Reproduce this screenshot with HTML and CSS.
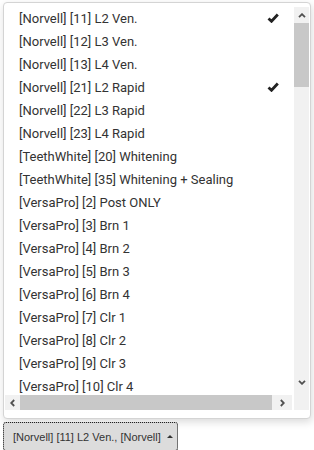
FILE: index.html
```html
<!DOCTYPE html>
<html lang="en">
<head>
    <meta charset="UTF-8">
    <title>Multiselect</title>
    <link rel="stylesheet" href="styles.css">
</head>
<body>
    <div class="menu">
        <div class="scroller">
            <ul class="options">
                <li class="opt selected"><span>[Norvell] [11] L2 Ven.</span><svg class="check" viewBox="0 0 12 10"><path d="M1.5 5.5 L4.5 8.3 L10.8 1.5"/></svg></li>
                <li class="opt"><span>[Norvell] [12] L3 Ven.</span></li>
                <li class="opt"><span>[Norvell] [13] L4 Ven.</span></li>
                <li class="opt selected"><span>[Norvell] [21] L2 Rapid</span><svg class="check" viewBox="0 0 12 10"><path d="M1.5 5.5 L4.5 8.3 L10.8 1.5"/></svg></li>
                <li class="opt"><span>[Norvell] [22] L3 Rapid</span></li>
                <li class="opt"><span>[Norvell] [23] L4 Rapid</span></li>
                <li class="opt"><span>[TeethWhite] [20] Whitening</span></li>
                <li class="opt"><span>[TeethWhite] [35] Whitening + Sealing</span></li>
                <li class="opt"><span>[VersaPro] [2] Post ONLY</span></li>
                <li class="opt"><span>[VersaPro] [3] Brn 1</span></li>
                <li class="opt"><span>[VersaPro] [4] Brn 2</span></li>
                <li class="opt"><span>[VersaPro] [5] Brn 3</span></li>
                <li class="opt"><span>[VersaPro] [6] Brn 4</span></li>
                <li class="opt"><span>[VersaPro] [7] Clr 1</span></li>
                <li class="opt"><span>[VersaPro] [8] Clr 2</span></li>
                <li class="opt"><span>[VersaPro] [9] Clr 3</span></li>
                <li class="opt"><span>[VersaPro] [10] Clr 4</span></li>
            </ul>
            <div class="vbar">
                <div class="arrow"><svg viewBox="0 0 8 5"><path d="M1 4.2 L4 1.2 L7 4.2"/></svg></div>
                <div class="vthumb"></div>
                <div class="vtrack"></div>
                <div class="arrow down"><svg viewBox="0 0 8 5"><path d="M1 0.8 L4 3.8 L7 0.8"/></svg></div>
            </div>
            <div class="hbar">
                <div class="arrow"><svg viewBox="0 0 5 8"><path d="M4.2 1 L1.2 4 L4.2 7"/></svg></div>
                <div class="hthumb"></div>
                <div class="arrow wide"><svg viewBox="0 0 5 8"><path d="M0.8 1 L3.8 4 L0.8 7"/></svg></div>
            </div>
        </div>
    </div>
    <button class="toggle">[Norvell] [11] L2 Ven., [Norvell] <span class="caret"></span></button>
</body>
</html>
```

FILE: styles.css
```css
body {
    margin: 0;
    background: #fff;
    font-family: Roboto, "Liberation Sans", sans-serif;
}
.menu {
    margin: 2px 0 0 3px;
    width: 304px;
    height: 409px;
    padding: 4px 1px 2px 1px;
    border: 1px solid #d4d4d4;
    border-radius: 4px;
    background: #fff;
    box-shadow: 1px 3px 8px rgba(0,0,0,0.15);
}
.scroller {
    display: grid;
    grid-template-columns: 287px 15px;
    grid-template-rows: 388px 15px;
    column-gap: 2px;
    height: 403px;
}
.options {
    grid-column: 1;
    grid-row: 1;
    list-style: none;
    margin: 0;
    padding: 0;
    overflow: hidden;
}
.opt {
    height: 23px;
    display: flex;
    align-items: center;
    justify-content: space-between;
    padding: 0 13px 0 14px;
    font-size: 13px;
    color: #333;
    white-space: nowrap;
}
.check {
    width: 12px;
    height: 10px;
    margin-top: -1px;
}
.check path {
    fill: none;
    stroke: #222;
    stroke-width: 2.8;
}
.vbar {
    grid-column: 2;
    grid-row: 1 / 3;
    display: flex;
    flex-direction: column;
    background: #f1f1f1;
}
.arrow {
    flex: 0 0 16px;
    display: flex;
    align-items: center;
    justify-content: center;
}
.arrow svg {
    width: 8px;
    height: 5px;
}
.arrow path {
    fill: none;
    stroke: #505050;
    stroke-width: 1.8;
}
.vthumb {
    height: 64px;
    background: #c8c8c8;
}
.vtrack {
    flex: 1;
}
.vbar .arrow.down {
    flex-basis: 30px;
    align-items: flex-start;
    padding-top: 7px;
}
.hbar {
    grid-column: 1;
    grid-row: 2;
    display: flex;
    background: #f1f1f1;
}
.hbar .arrow {
    flex: 0 0 15px;
}
.hbar .arrow svg {
    width: 5px;
    height: 8px;
}
.hthumb {
    width: 252px;
    background: #c8c8c8;
}
.hbar .arrow.wide {
    flex: 1;
}
.toggle {
    margin: 3px 0 0 3px;
    width: 175px;
    height: 29px;
    padding: 0 0 0 9px;
    display: flex;
    align-items: center;
    white-space: nowrap;
    background: #dcdcdc;
    border: 1px solid #c4c4c4;
    border-radius: 3px;
    outline: 1px dotted #222;
    outline-offset: -1px;
    font-family: "Liberation Sans", Arial, sans-serif;
    font-size: 11px;
    color: #333;
}
.caret {
    margin-left: 6px;
    width: 0;
    height: 0;
    border-left: 3px solid transparent;
    border-right: 3px solid transparent;
    border-bottom: 3px solid #333;
}
```
